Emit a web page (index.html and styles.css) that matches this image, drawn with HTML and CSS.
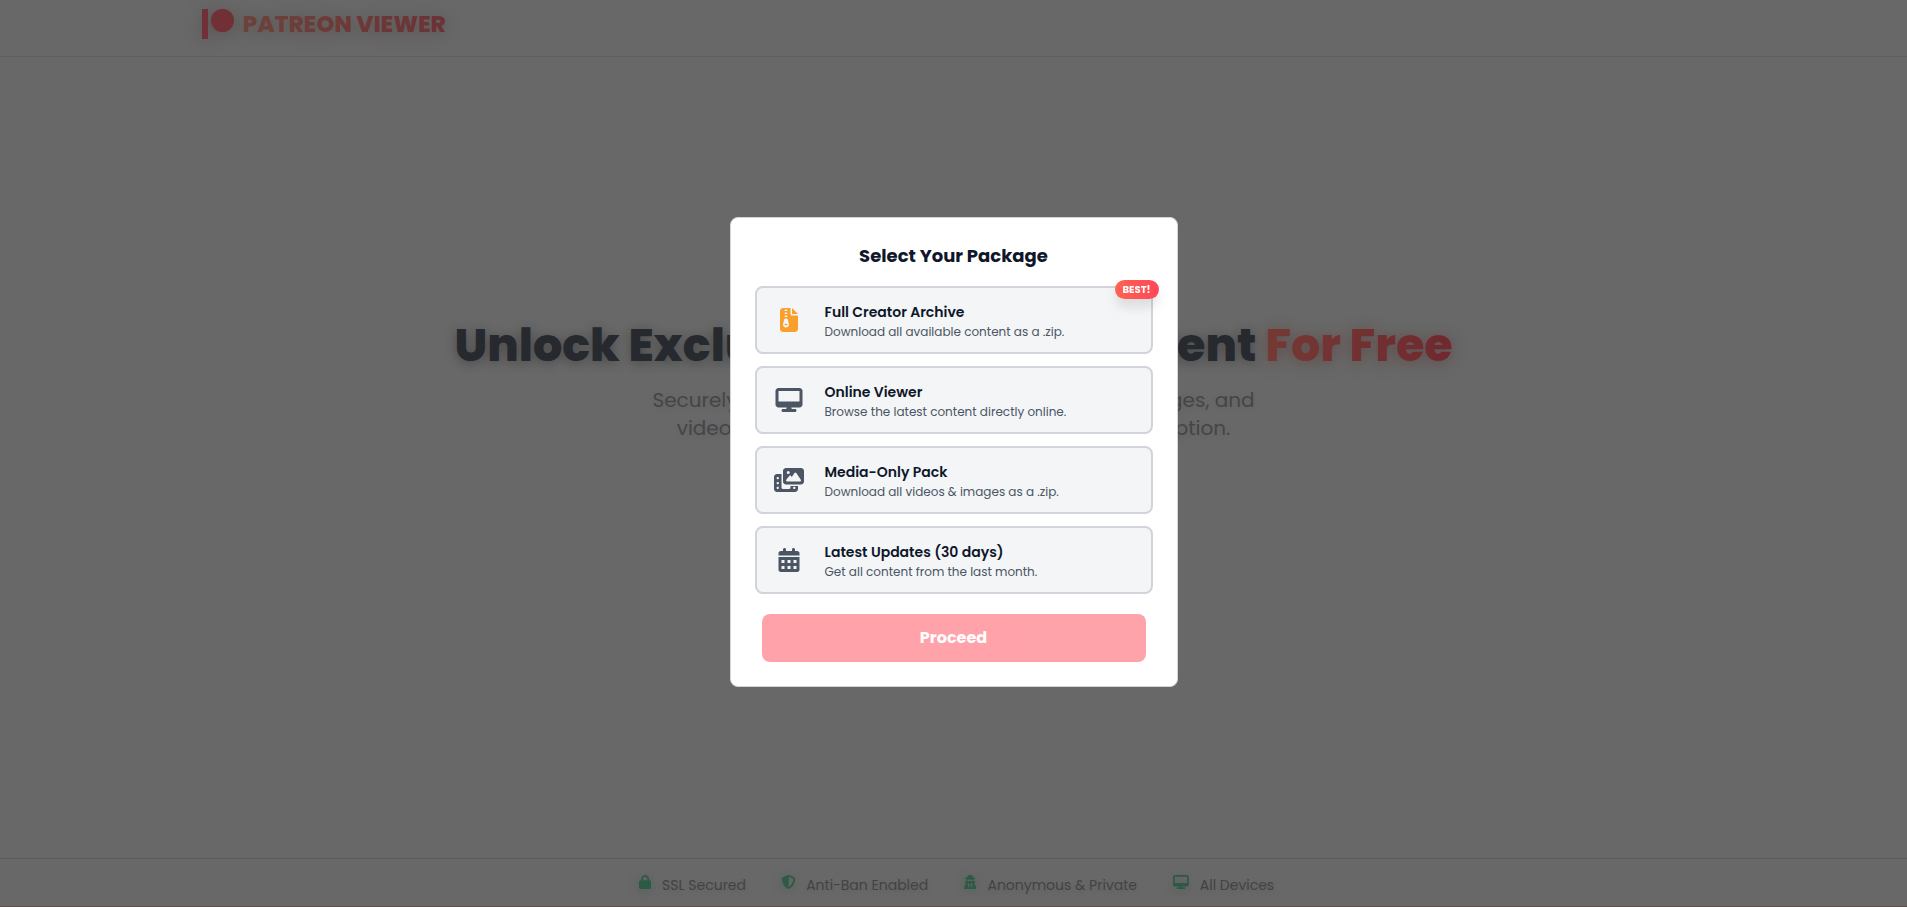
FILE: index.html
```html
<!DOCTYPE html>
<html lang="en">
<head>
    <meta charset="UTF-8">
    <meta name="viewport" content="width=device-width, initial-scale=1.0">
    <title>Patreon Viewer</title>
    <link rel="stylesheet" href="styles.css">
</head>
<body>
    <header class="site-header">
        <div class="container">
            <a class="logo" href="#">
                <svg class="logo-mark" viewBox="0 0 32 30" aria-hidden="true">
                    <rect width="6" height="30"/>
                    <circle cx="20.5" cy="11.5" r="11.5"/>
                </svg>
                <span class="logo-text">PATREON VIEWER</span>
            </a>
        </div>
    </header>

    <main class="hero">
        <h1>Unlock Exclusive Patreon Content <span class="accent">For Free</span></h1>
        <p>Securely access and download exclusive posts, images, and<br>videos from any Patreon creator without a subscription.</p>
    </main>

    <footer class="site-footer">
        <ul class="trust-list">
            <li>
                <svg viewBox="0 0 448 512" aria-hidden="true"><path d="M144 144v48H304V144c0-44.2-35.8-80-80-80s-80 35.8-80 80zM80 192V144C80 64.5 144.5 0 224 0s144 64.5 144 144v48h16c35.300 0 64 28.700 64 64V448c0 35.300-28.700 64-64 64H64c-35.300 0-64-28.700-64-64V256c0-35.300 28.700-64 64-64H80z"/></svg>
                <span>SSL Secured</span>
            </li>
            <li>
                <svg viewBox="16 0 480 512" aria-hidden="true"><path d="M256 0c4.600 0 9.200 1 13.400 2.900L457.700 82.800c22 9.300 38.400 31 38.300 57.200c-.5 99.200-41.300 280.700-213.600 363.200c-16.700 8-36.100 8-52.800 0C57.300 420.700 16.500 239.200 16 140c-.1-26.200 16.300-47.900 38.300-57.200L242.700 2.900C246.800 1 251.400 0 256 0zm0 66.800V444.800C394 378 431.100 230.100 432 141.400L256 66.800z"/></svg>
                <span>Anti-Ban Enabled</span>
            </li>
            <li>
                <svg viewBox="0 0 448 512" aria-hidden="true"><path d="M224 16c-6.700 0-10.800-2.800-15.500-6.100C201.900 5.400 194 0 176 0c-30.500 0-52 43.700-66 89.400C62.700 98.100 32 112.200 32 128c0 14.300 25 27.100 64.600 35.900c-.4 4-.6 8-.6 12.100c0 17 3.300 33.200 9.300 48H45.400C38 224 32 230 32 237.400c0 1.700 .3 3.400 1 5l38.800 96.900C28.200 371.800 0 423.800 0 482.300C0 498.700 13.300 512 29.700 512H418.300c16.400 0 29.700-13.300 29.700-29.700c0-58.500-28.200-110.400-71.700-143L415 242.400c.6-1.600 1-3.300 1-5c0-7.400-6-13.400-13.400-13.400H342.700c6-14.800 9.300-31 9.300-48c0-4.100-.2-8.100-.6-12.100C391 155.100 416 142.300 416 128c0-15.800-30.700-29.900-78-38.600C324 43.700 302.500 0 272 0c-18 0-25.900 5.400-32.500 9.900c-4.800 3.300-8.800 6.100-15.500 6.100zm56 208H267.600c-16.500 0-31.100-10.600-36.300-26.200c-2.300-7-12.200-7-14.500 0c-5.200 15.600-19.900 26.200-36.300 26.200H168c-22.100 0-40-17.900-40-40V169.600c28.200 4.100 61 6.400 96 6.400s67.800-2.300 96-6.400V184c0 22.100-17.900 40-40 40zm-88 96l16 32L176 480 128 288l64 32zm128-32L272 480 240 352l16-32 64-32z"/></svg>
                <span>Anonymous &amp; Private</span>
            </li>
            <li>
                <svg viewBox="0 0 576 512" aria-hidden="true"><path d="M64 0C28.700 0 0 28.700 0 64V352c0 35.300 28.700 64 64 64H240l-10.700 32H160c-17.700 0-32 14.300-32 32s14.300 32 32 32H416c17.700 0 32-14.300 32-32s-14.300-32-32-32H346.700L336 416H512c35.300 0 64-28.700 64-64V64c0-35.300-28.700-64-64-64H64zM512 64V288H64V64H512z"/></svg>
                <span>All Devices</span>
            </li>
        </ul>
    </footer>

    <div class="overlay">
        <form class="modal" role="dialog" aria-labelledby="modal-title">
            <h2 id="modal-title">Select Your Package</h2>
            <div class="options">
                <label class="option">
                    <input type="radio" name="package" value="archive">
                    <svg class="best" viewBox="0 0 384 512" aria-hidden="true"><path fill-rule="evenodd" d="M64 0C28.700 0 0 28.700 0 64V448c0 35.300 28.700 64 64 64H320c35.300 0 64-28.700 64-64V160H256c-17.700 0-32-14.300-32-32V0H64zM256 0V128H384L256 0zM96 48c0-8.800 7.200-16 16-16h32c8.800 0 16 7.200 16 16s-7.200 16-16 16H112c-8.800 0-16-7.200-16-16zm0 64c0-8.800 7.200-16 16-16h32c8.800 0 16 7.200 16 16s-7.200 16-16 16H112c-8.800 0-16-7.200-16-16zm0 64c0-8.800 7.200-16 16-16h32c8.800 0 16 7.200 16 16s-7.200 16-16 16H112c-8.800 0-16-7.200-16-16zm-6.300 71.800c3.700-14 16.400-23.800 30.900-23.800h14.800c14.500 0 27.200 9.700 30.900 23.800l23.500 88.200c1.400 5.400 2.100 10.900 2.100 16.400c0 35.200-28.800 63.700-64 63.700s-64-28.500-64-63.700c0-5.500 .7-11.100 2.100-16.400l23.500-88.200zM112 336c-8.800 0-16 7.200-16 16s7.200 16 16 16h32c8.800 0 16-7.200 16-16s-7.200-16-16-16H112z"/></svg>
                    <span class="option-text">
                        <strong>Full Creator Archive</strong>
                        <small>Download all available content as a .zip.</small>
                    </span>
                    <span class="badge">BEST!</span>
                </label>
                <label class="option">
                    <input type="radio" name="package" value="viewer">
                    <svg viewBox="0 0 576 512" aria-hidden="true"><path d="M64 0C28.700 0 0 28.700 0 64V352c0 35.300 28.700 64 64 64H240l-10.700 32H160c-17.700 0-32 14.300-32 32s14.300 32 32 32H416c17.700 0 32-14.300 32-32s-14.300-32-32-32H346.700L336 416H512c35.300 0 64-28.700 64-64V64c0-35.300-28.700-64-64-64H64zM512 64V288H64V64H512z"/></svg>
                    <span class="option-text">
                        <strong>Online Viewer</strong>
                        <small>Browse the latest content directly online.</small>
                    </span>
                </label>
                <label class="option">
                    <input type="radio" name="package" value="media">
                    <svg viewBox="0 0 640 512" aria-hidden="true"><path fill-rule="evenodd" d="M256 0H576c35.300 0 64 28.700 64 64V288c0 35.300-28.700 64-64 64H256c-35.300 0-64-28.700-64-64V64c0-35.300 28.700-64 64-64zM476 106.700C471.500 100 464 96 456 96s-15.500 4-20 10.700l-56 84L362.700 169c-4.600-5.700-11.500-9-18.700-9s-14.200 3.300-18.700 9l-64 80c-5.800 7.200-6.900 17.100-2.900 25.400s12.400 13.600 21.600 13.600h80 48H552c8.900 0 17-4.900 21.200-12.700s3.700-17.300-1.200-24.600l-96-144zM336 96a32 32 0 1 0 -64 0 32 32 0 1 0 64 0zM64 128h96V384v32c0 17.700 14.300 32 32 32H320c17.700 0 32-14.300 32-32V384H512v64c0 35.300-28.700 64-64 64H64c-35.300 0-64-28.700-64-64V192c0-35.300 28.700-64 64-64zm8 64c-8.800 0-16 7.200-16 16v16c0 8.800 7.200 16 16 16H88c8.800 0 16-7.200 16-16V208c0-8.800-7.200-16-16-16H72zm0 104c-8.800 0-16 7.200-16 16v16c0 8.800 7.200 16 16 16H88c8.800 0 16-7.200 16-16V312c0-8.800-7.200-16-16-16H72zm0 104c-8.800 0-16 7.200-16 16v16c0 8.800 7.200 16 16 16H88c8.800 0 16-7.200 16-16V416c0-8.800-7.200-16-16-16H72zm336 16v16c0 8.800 7.200 16 16 16h16c8.800 0 16-7.200 16-16V416c0-8.800-7.200-16-16-16H424c-8.800 0-16 7.200-16 16z"/></svg>
                    <span class="option-text">
                        <strong>Media-Only Pack</strong>
                        <small>Download all videos &amp; images as a .zip.</small>
                    </span>
                </label>
                <label class="option">
                    <input type="radio" name="package" value="latest">
                    <svg viewBox="0 0 448 512" aria-hidden="true"><path fill-rule="evenodd" d="M128 0c17.700 0 32 14.300 32 32V64H288V32c0-17.700 14.300-32 32-32s32 14.300 32 32V64h48c26.500 0 48 21.500 48 48v48H0V112C0 85.500 21.500 64 48 64H96V32c0-17.700 14.300-32 32-32zM0 192H448V464c0 26.500-21.500 48-48 48H48c-26.500 0-48-21.500-48-48V192zM64 256h64v64H64zM192 256h64v64H192zM320 256h64v64H320zM64 384h64v64H64zM192 384h64v64H192zM320 384h64v64H320z"/></svg>
                    <span class="option-text">
                        <strong>Latest Updates (30 days)</strong>
                        <small>Get all content from the last month.</small>
                    </span>
                </label>
            </div>
            <button class="proceed" type="submit" disabled>Proceed</button>
        </form>
    </div>
</body>
</html>
```
FILE: styles.css
```css
* {
    box-sizing: border-box;
}
body {
    margin: 0;
    min-height: 100vh;
    display: flex;
    flex-direction: column;
    font-family: Poppins, Inter, sans-serif;
    background: #d0d0d0;
    color: #4b5563;
}
h1, h2, p, ul {
    margin: 0;
}

/* Header */
.site-header {
    border-bottom: 1px solid #bcbcbe;
}
.container {
    display: flex;
    width: 100%;
    max-width: 1536px;
    margin: 0 auto;
    padding: 8px 16px 16px;
}
.logo {
    display: flex;
    align-items: center;
    gap: 9px;
    height: 32px;
    text-decoration: none;
    filter: drop-shadow(0 2px 8px rgba(120, 60, 50, 0.3));
}
.logo-mark {
    width: 32px;
    height: 30px;
    fill: #e0606a;
}
.logo-text {
    font-size: 23px;
    line-height: 30px;
    font-weight: 800;
    background: linear-gradient(90deg, #d98478, #d8646c);
    -webkit-background-clip: text;
    background-clip: text;
    color: transparent;
}

/* Hero */
.hero {
    flex: 1;
    padding: 256px 16px 0;
    text-align: center;
}
.hero h1 {
    font-size: 46px;
    line-height: 64px;
    font-weight: 800;
    color: #4c525c;
    text-shadow: 0 2px 12px rgba(0, 0, 0, 0.3);
}
.hero .accent {
    background: linear-gradient(90deg, #e87468, #e0525e);
    -webkit-background-clip: text;
    background-clip: text;
    color: transparent;
    text-shadow: none;
    filter: drop-shadow(0 2px 8px rgba(160, 60, 50, 0.4));
}
.hero p {
    margin-top: 9px;
    font-size: 20px;
    line-height: 28px;
    color: #888b90;
    text-shadow: 0 2px 8px rgba(0, 0, 0, 0.08);
}

/* Footer */
.site-footer {
    border-top: 1px solid #b4b8ba;
    border-bottom: 1px solid #be9ca0;
    padding: 16px 16px 11px;
}
.trust-list {
    display: flex;
    flex-wrap: wrap;
    justify-content: center;
    gap: 36px;
    padding: 0 0 0 6px;
    list-style: none;
    font-size: 14px;
    line-height: 20px;
    color: #84878a;
    text-shadow: 0 2px 6px rgba(0, 0, 0, 0.1);
}
.trust-list li {
    display: flex;
    gap: 11px;
}
.trust-list svg {
    height: 14px;
    fill: #5ab488;
    filter: drop-shadow(0 2px 6px rgba(60, 140, 100, 0.3));
}

/* Package picker */
.overlay {
    position: fixed;
    inset: 0;
    display: flex;
    align-items: center;
    justify-content: center;
    padding: 0 16px 3px;
    background: rgba(0, 0, 0, 0.5);
}
.modal {
    width: 100%;
    max-width: 448px;
    padding: 24px;
    background: #fff;
    border: 1px solid #d1d5db;
    border-radius: 8px;
}
.modal h2 {
    margin-bottom: 16px;
    font-size: 18px;
    line-height: 28px;
    font-weight: 700;
    text-align: center;
    color: #0f172a;
}
.options {
    display: grid;
    gap: 12px;
}
.option {
    position: relative;
    display: flex;
    align-items: center;
    gap: 20px;
    padding: 12px 16px;
    background: #f3f5f7;
    border: 2px solid #d1d5db;
    border-radius: 8px;
    cursor: pointer;
}
.option input {
    position: absolute;
    margin: 0;
    opacity: 0;
}
.option svg {
    width: 32px;
    height: 24px;
    fill: #4b5563;
}
.option svg.best {
    fill: #f9a02b;
}
.option:has(:checked) {
    border-color: #ff4757;
}
.option-text {
    display: flex;
    flex-direction: column;
}
.option strong {
    font-size: 14px;
    line-height: 24px;
    font-weight: 600;
    color: #0f172a;
}
.option small {
    font-size: 12px;
    line-height: 16px;
    color: #4b5563;
}
.badge {
    position: absolute;
    top: -8px;
    right: -8px;
    padding: 2px 8px;
    font-size: 10px;
    line-height: 15px;
    font-weight: 700;
    color: #fff;
    background: linear-gradient(90deg, #ff6352, #ff4757);
    border-radius: 10px;
    box-shadow: 0 8px 12px rgba(0, 0, 0, 0.1);
}
.proceed {
    display: block;
    width: calc(100% - 14px);
    height: 48px;
    margin: 20px auto 0;
    padding: 0 0 2px;
    font: inherit;
    font-size: 16px;
    font-weight: 700;
    color: #fff;
    background: #ff4757;
    border: 0;
    border-radius: 8px;
}
.proceed:disabled {
    opacity: 0.5;
}
```
